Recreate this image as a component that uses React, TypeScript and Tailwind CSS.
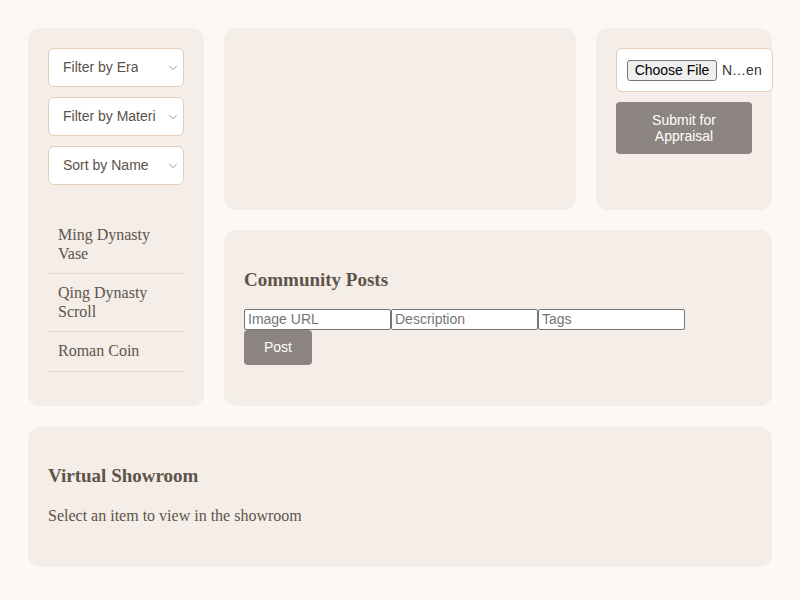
import { ChevronDown } from "lucide-react";

const selects = ["Filter by Era", "Filter by Material", "Sort by Name"];
const items = ["Ming Dynasty Vase", "Qing Dynasty Scroll", "Roman Coin"];

const sans = "font-['Liberation_Sans',Arial,sans-serif]";
const serif = "font-['Liberation_Serif','Times_New_Roman',serif]";

function FakeSelect({ label }: { label: string }) {
  return (
    <div className="relative mb-[10px] flex h-[39px] w-full items-center rounded-md border border-[#e4cfb8] bg-white pl-[14px] pr-[27px]">
      <span className={`${sans} overflow-hidden whitespace-nowrap text-[14px] text-[#5a5149]`}>{label}</span>
      <ChevronDown className="absolute right-[3px] top-[12px] h-[14px] w-[14px] text-[#7a7470]" strokeWidth={1.2} />
    </div>
  );
}

export default function App() {
  return (
    <div className="min-h-[600px] w-full bg-[#fcf8f3] p-7">
      <div className="grid grid-cols-[minmax(0,1fr)_minmax(0,2fr)_minmax(0,1fr)] grid-rows-[182px_176px_auto] gap-5">
        {/* sidebar */}
        <aside className="row-span-2 rounded-xl bg-[#f4ede8] p-5">
          {selects.map((s) => (
            <FakeSelect key={s} label={s} />
          ))}
          <ul className="mt-[31px]">
            {items.map((it) => (
              <li
                key={it}
                className={`${serif} border-b border-[#e5d8c9] px-[10px] py-[10px] text-[16px] leading-[18.5px] text-[#5e554c]`}
              >
                {it}
              </li>
            ))}
          </ul>
        </aside>

        {/* viewer */}
        <div className="rounded-xl bg-[#f4ede8]" />

        {/* upload */}
        <div className="rounded-xl bg-[#f4ede8] p-5">
          <div className="flex h-[44px] w-[157px] items-center whitespace-nowrap rounded-md border border-[#e4cfb8] bg-white pl-[10px]">
            <span className={`${sans} flex h-[21px] w-[90px] shrink-0 items-center justify-center rounded-[3px] border border-[#767676] bg-[#efefef] text-[14px] text-black`}>
              Choose File
            </span>
            <span className={`${sans} ml-[5px] shrink-0 text-[14px] text-[#333]`}>N…en</span>
          </div>
          <button
            className={`${sans} mt-[10px] flex h-[52px] w-[136px] items-center justify-center rounded-[4px] bg-[#8c8480] text-[14px] leading-[16px] text-white`}
          >
            Submit for
            <br />
            Appraisal
          </button>
        </div>

        {/* community */}
        <section className="col-start-2 col-span-2 rounded-xl bg-[#f4ede8] p-5">
          <h2 className={`${serif} mt-[19px] text-[19px] font-bold leading-[22px] text-[#5f5449]`}>Community Posts</h2>
          <div className="mt-[18px] flex">
            {["Image URL", "Description", "Tags"].map((p) => (
              <input
                key={p}
                placeholder={p}
                className={`${sans} h-[21px] w-[147px] rounded-[2px] border border-[#767676] bg-white px-[3px] text-[14px] text-black placeholder:text-[#757575]`}
              />
            ))}
          </div>
          <button className={`${sans} h-[35px] w-[68px] rounded-[4px] bg-[#8c8480] text-[14px] text-white`}>Post</button>
        </section>

        {/* showroom */}
        <section className="col-span-3 mt-px rounded-xl bg-[#f4ede8] p-5 pb-[42px]">
          <h2 className={`${serif} mt-[18px] text-[19px] font-bold leading-[22px] text-[#5f5449]`}>Virtual Showroom</h2>
          <p className={`${serif} mt-[20px] text-[16px] leading-[18px] text-[#5e554c]`}>Select an item to view in the showroom</p>
        </section>
      </div>
    </div>
  );
}
